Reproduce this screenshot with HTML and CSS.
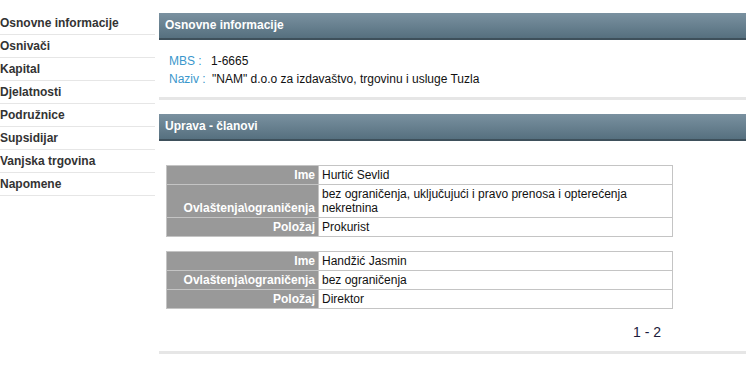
FILE: index.html
```html
<!DOCTYPE html>
<html lang="bs">
<head>
    <meta charset="UTF-8">
    <title>Osnovne informacije</title>
    <link rel="stylesheet" href="styles.css">
</head>
<body>

    <div class="page">
        <ul class="side-menu">
            <li>Osnovne informacije</li>
            <li>Osnivači</li>
            <li>Kapital</li>
            <li>Djelatnosti</li>
            <li>Podružnice</li>
            <li>Supsidijar</li>
            <li>Vanjska trgovina</li>
            <li>Napomene</li>
        </ul>

        <div class="main">
            <div class="section">
                <div class="section-title">Osnovne informacije</div>
                <div class="info">
                    <div class="info-row"><span class="info-label">MBS :</span> <span class="info-value mbs">1-6665</span></div>
                    <div class="info-row"><span class="info-label">Naziv :</span> <span class="info-value">"NAM" d.o.o za izdavaštvo, trgovinu i usluge Tuzla</span></div>
                </div>
            </div>

            <div class="section">
                <div class="section-title">Uprava - članovi</div>
                <div class="members">
                    <table class="member">
                        <colgroup><col class="col-label"><col></colgroup>
                        <tr><th>Ime</th><td>Hurtić Sevlid</td></tr>
                        <tr><th>Ovlaštenja\ograničenja</th><td>bez ograničenja, uključujući i pravo prenosa i opterećenja nekretnina</td></tr>
                        <tr><th>Položaj</th><td>Prokurist</td></tr>
                    </table>

                    <table class="member">
                        <colgroup><col class="col-label"><col></colgroup>
                        <tr><th>Ime</th><td>Handžić Jasmin</td></tr>
                        <tr><th>Ovlaštenja\ograničenja</th><td>bez ograničenja</td></tr>
                        <tr><th>Položaj</th><td>Direktor</td></tr>
                    </table>

                    <div class="pager">1 - 2</div>
                </div>
            </div>
        </div>
    </div>

</body>
</html>
```

FILE: styles.css
```css
body {
    font-family: "Liberation Sans", Arial, sans-serif;
    font-size: 12px;
    color: #111;
    background-color: #fff;
    margin: 0;
    padding: 0;
}

.page {
    display: flex;
    align-items: flex-start;
}

.side-menu {
    list-style: none;
    width: 155px;
    margin: 12px 0 0 0;
    padding: 0;
    flex-shrink: 0;
}

.side-menu li {
    height: 22px;
    line-height: 22px;
    font-weight: bold;
    color: #333;
    border-bottom: 1px solid #e6e6e6;
    white-space: nowrap;
}

.main {
    flex: 1;
    margin: 13px 0 0 4px;
}

.section {
    border-bottom: 3px solid #e6e6e6;
    margin-bottom: 14px;
}

.section-title {
    height: 25px;
    line-height: 25px;
    padding-left: 6px;
    color: #fff;
    font-weight: bold;
    background: linear-gradient(to bottom, #7a91a0, #56707f);
    border-bottom: 2px solid #3e505b;
}

.info {
    padding: 12px 10px 9px 10px;
}

.info-row {
    line-height: 18px;
}

.info-label {
    color: #3a97cc;
}

.info-value {
    margin-left: 3px;
}

.info-value.mbs {
    margin-left: 6px;
}

.members {
    padding: 24px 0 10px 7px;
}

.member {
    width: 507px;
    table-layout: fixed;
    border-collapse: collapse;
    margin-bottom: 14px;
}

.col-label {
    width: 152px;
}

.member th,
.member td {
    border: 1px solid #c4c4c4;
    padding: 2px 3px;
    line-height: 14px;
}

.member th {
    background-color: #999;
    color: #fff;
    text-align: right;
    vertical-align: bottom;
    white-space: nowrap;
}

.member td {
    text-align: left;
    vertical-align: top;
}

.pager {
    width: 495px;
    text-align: right;
    font-size: 14px;
    line-height: 18px;
    color: #1b1b3a;
}
```
